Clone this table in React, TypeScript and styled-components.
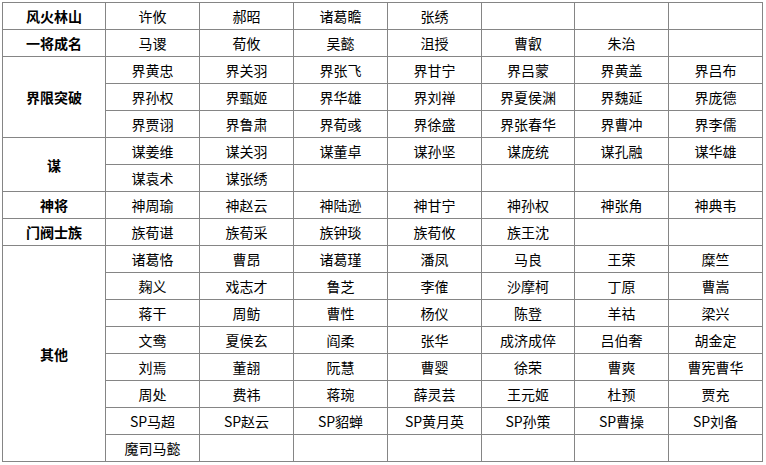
import React from "react";
import styled, { createGlobalStyle } from "styled-components";

const Global = createGlobalStyle`
  html, body { margin: 0; padding: 0; background: #fff; }
  body { font-family: "Noto Sans CJK SC", "Microsoft YaHei", sans-serif; }
`;

const Wrap = styled.div`
  padding: 2px 0 0 2px;
`;

const Table = styled.table`
  border-collapse: collapse;
  table-layout: fixed;
  width: 760px;
  font-size: 14px;
  color: #000;
`;

const Row = styled.tr`
  height: 27px;
`;

const Cell = styled.td<{ $head?: boolean }>`
  border: 1px solid #858585;
  padding: 0;
  text-align: center;
  vertical-align: middle;
  line-height: 18px;
  white-space: nowrap;
  font-weight: ${(p) => (p.$head ? 700 : 400)};
`;

type Group = { name: string; rows: string[][] };

const groups: Group[] = [
  { name: "风火林山", rows: [["许攸", "郝昭", "诸葛瞻", "张绣", "", "", ""]] },
  { name: "一将成名", rows: [["马谡", "荀攸", "吴懿", "沮授", "曹叡", "朱治", ""]] },
  {
    name: "界限突破",
    rows: [
      ["界黄忠", "界关羽", "界张飞", "界甘宁", "界吕蒙", "界黄盖", "界吕布"],
      ["界孙权", "界甄姬", "界华雄", "界刘禅", "界夏侯渊", "界魏延", "界庞德"],
      ["界贾诩", "界鲁肃", "界荀彧", "界徐盛", "界张春华", "界曹冲", "界李儒"],
    ],
  },
  {
    name: "谋",
    rows: [
      ["谋姜维", "谋关羽", "谋董卓", "谋孙坚", "谋庞统", "谋孔融", "谋华雄"],
      ["谋袁术", "谋张绣", "", "", "", "", ""],
    ],
  },
  { name: "神将", rows: [["神周瑜", "神赵云", "神陆逊", "神甘宁", "神孙权", "神张角", "神典韦"]] },
  { name: "门阀士族", rows: [["族荀谌", "族荀采", "族钟琰", "族荀攸", "族王沈", "", ""]] },
  {
    name: "其他",
    rows: [
      ["诸葛恪", "曹昂", "诸葛瑾", "潘凤", "马良", "王荣", "糜竺"],
      ["麹义", "戏志才", "鲁芝", "李傕", "沙摩柯", "丁原", "曹嵩"],
      ["蒋干", "周鲂", "曹性", "杨仪", "陈登", "羊祜", "梁兴"],
      ["文鸯", "夏侯玄", "阎柔", "张华", "成济成倅", "吕伯奢", "胡金定"],
      ["刘焉", "董翓", "阮慧", "曹婴", "徐荣", "曹爽", "曹宪曹华"],
      ["周处", "费祎", "蒋琬", "薛灵芸", "王元姬", "杜预", "贾充"],
      ["SP马超", "SP赵云", "SP貂蝉", "SP黄月英", "SP孙策", "SP曹操", "SP刘备"],
      ["魔司马懿", "", "", "", "", "", ""],
    ],
  },
];

const widths = [103, 94, 94, 94, 94, 93, 94, 94];

export default function App() {
  return (
    <Wrap>
      <Global />
      <Table>
        <colgroup>
          {widths.map((w, i) => (
            <col key={i} style={{ width: w }} />
          ))}
        </colgroup>
        <tbody>
          {groups.map((g) =>
            g.rows.map((r, ri) => (
              <Row key={g.name + ri}>
                {ri === 0 && (
                  <Cell $head rowSpan={g.rows.length}>
                    {g.name}
                  </Cell>
                )}
                {r.map((c, ci) => (
                  <Cell key={ci}>{c}</Cell>
                ))}
              </Row>
            ))
          )}
        </tbody>
      </Table>
    </Wrap>
  );
}
